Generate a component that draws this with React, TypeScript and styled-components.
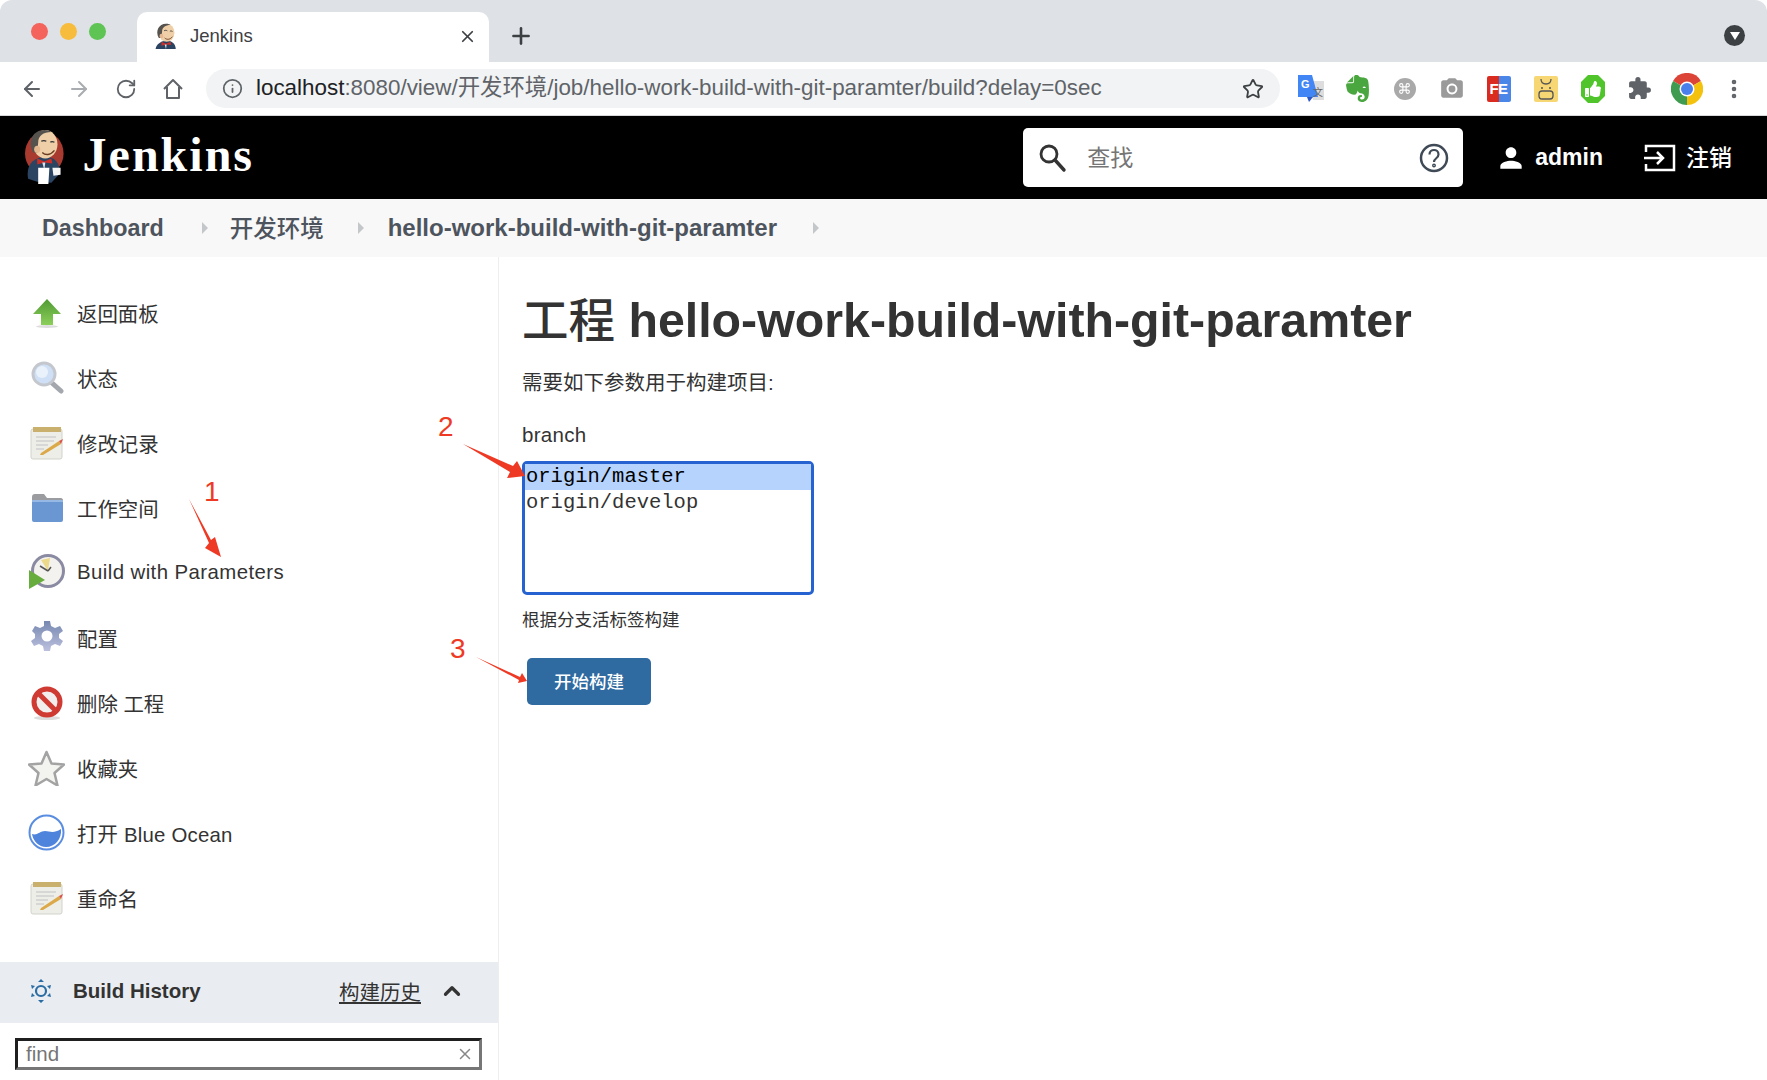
import React from "react";
import styled, { createGlobalStyle } from "styled-components";
import {
    ArrowLeft,
    ArrowRight,
    ChevronUp,
    Command,
    Info,
    MoreVertical,
    Plus,
    RotateCw,
    Star,
    X,
} from "lucide-react";
import { FaThumbsUp } from "react-icons/fa";
import { MdCameraAlt, MdExtension, MdPerson } from "react-icons/md";
import { SiEvernote } from "react-icons/si";

const SANS = `"Liberation Sans", "Noto Sans CJK SC", sans-serif`;

const GlobalStyle = createGlobalStyle`
    html, body {
        margin: 0;
        padding: 0;
        background: #ffffff;
    }
    * {
        box-sizing: border-box;
    }
`;

const Window = styled.div`
    position: relative;
    display: flex;
    flex-direction: column;
    width: 1767px;
    height: 1080px;
    overflow: hidden;
    border-radius: 12px;
    background: #ffffff;
    font-family: ${SANS};
    color: #333333;
`;

/* browser chrome */

const TabStrip = styled.div`
    display: flex;
    align-items: flex-end;
    flex: none;
    height: 62px;
    padding-left: 31px;
    background: #dee1e6;
`;

const Lights = styled.div`
    display: flex;
    gap: 12px;
    align-self: flex-start;
    margin-top: 23px;
    width: 106px;
`;

const Light = styled.span<{ $color: string }>`
    width: 17px;
    height: 17px;
    border-radius: 50%;
    background: ${(p) => p.$color};
`;

const Tab = styled.div`
    display: flex;
    align-items: center;
    width: 352px;
    height: 50px;
    padding: 0 12px 2px 16px;
    background: #ffffff;
    border-radius: 10px 10px 0 0;
    color: #3c4043;
    font-size: 18.5px;
`;

const TabTitle = styled.span`
    flex: 1;
    margin-left: 11px;
`;

const NewTab = styled.div`
    display: flex;
    align-self: center;
    margin: 9px 0 0 19px;
    color: #3c4043;
`;

const TabMenu = styled.div`
    display: flex;
    align-items: center;
    justify-content: center;
    align-self: center;
    width: 21px;
    height: 21px;
    margin: 8px 22px 0 auto;
    border-radius: 50%;
    background: #3c4043;
`;

const TabMenuArrow = styled.span`
    width: 0;
    height: 0;
    margin-top: 2px;
    border-left: 5px solid transparent;
    border-right: 5px solid transparent;
    border-top: 8px solid #ffffff;
`;

const Toolbar = styled.div`
    display: flex;
    align-items: center;
    flex: none;
    height: 54px;
    padding-left: 20px;
    background: #ffffff;
    border-bottom: 1px solid #d6d8db;
`;

const NavButtons = styled.div`
    display: flex;
    align-items: center;
    flex: none;
    gap: 23px;
    width: 186px;
`;

const NavButton = styled.span<{ $muted?: boolean }>`
    display: flex;
    align-items: center;
    justify-content: center;
    width: 24px;
    color: ${(p) => (p.$muted ? "#a9acb0" : "#5f6368")};
`;

const Omnibox = styled.div`
    display: flex;
    align-items: center;
    flex: none;
    width: 1074px;
    height: 39px;
    padding: 0 16px;
    border-radius: 20px;
    background: #f1f3f4;
    color: #5f6368;
`;

const Url = styled.div`
    flex: 1;
    margin-left: 13px;
    padding-bottom: 1px;
    font-size: 22.4px;
    line-height: 28px;
    color: #5f6368;
    white-space: nowrap;
`;

const UrlHost = styled.span`
    color: #202124;
`;

const Extensions = styled.div`
    display: flex;
    align-items: center;
    flex: none;
    margin-left: 7px;
`;

const Extension = styled.span`
    display: flex;
    align-items: center;
    justify-content: center;
    width: 47px;
    height: 40px;
    color: #5f6368;
`;

const GrayDisc = styled.span`
    display: flex;
    align-items: center;
    justify-content: center;
    width: 22px;
    height: 22px;
    border-radius: 50%;
    background: #a9a9a9;
    color: #ffffff;
`;

const FeBadge = styled.span`
    display: flex;
    align-items: center;
    justify-content: center;
    width: 24px;
    height: 26px;
    border-radius: 2px;
    background: linear-gradient(90deg, #d92b20 0 50%, #4a86e8 50%);
    color: #ffffff;
    font-size: 15px;
    font-weight: 700;
    letter-spacing: -0.5px;
`;

/* jenkins header */

const Header = styled.header`
    display: flex;
    align-items: center;
    flex: none;
    height: 83px;
    padding: 0 35px 0 24px;
    background: #000000;
    color: #ffffff;
`;

const Brand = styled.div`
    flex: 1;
    display: flex;
    align-items: center;
    gap: 18px;
`;

const BrandName = styled.span`
    padding-bottom: 5px;
    font-family: "Liberation Serif", serif;
    font-size: 48px;
    line-height: 56px;
    font-weight: 700;
    letter-spacing: 2px;
`;

const SearchBox = styled.div`
    display: flex;
    align-items: center;
    width: 440px;
    height: 59px;
    padding: 0 14px;
    border-radius: 5px;
    background: #ffffff;
    color: #333333;
`;

const SearchPlaceholder = styled.span`
    flex: 1;
    margin-left: 20px;
    padding-bottom: 4px;
    color: #757575;
    font-size: 23px;
`;

const HeaderLink = styled.div<{ $gap: number; $left: number }>`
    display: flex;
    align-items: center;
    gap: ${(p) => p.$gap}px;
    margin-left: ${(p) => p.$left}px;
    font-size: 23px;
    font-weight: 700;
`;

const LogoutLabel = styled.span`
    padding-bottom: 3px;
    font-weight: 500;
`;

/* breadcrumbs */

const Breadcrumbs = styled.nav`
    display: flex;
    align-items: center;
    flex: none;
    height: 58px;
    padding-left: 42px;
    background: #f8f8f8;
    color: #4d545d;
    font-size: 24px;
    font-weight: 700;
`;

const DashboardCrumb = styled.span`
    font-size: 23.3px;
`;

const CrumbCjk = styled.span`
    padding-bottom: 2px;
    font-size: 23.5px;
    font-weight: 500;
`;

const Caret = styled.span<{ $left: number; $right: number }>`
    width: 0;
    height: 0;
    margin: 0 ${(p) => p.$right}px 0 ${(p) => p.$left}px;
    border-top: 6px solid transparent;
    border-bottom: 6px solid transparent;
    border-left: 6px solid #c4c7ca;
`;

/* page */

const Body = styled.div`
    display: flex;
    flex: 1;
    min-height: 0;
`;

const Sidebar = styled.aside`
    display: flex;
    flex-direction: column;
    flex: none;
    width: 499px;
    border-right: 1px solid #eeeeee;
`;

const Tasks = styled.ul`
    flex: 1;
    margin: 0;
    padding: 23px 0 0;
    list-style: none;
`;

const Task = styled.li<{ $spacing: number }>`
    display: flex;
    align-items: center;
    height: 65px;
    padding-left: 28px;
    font-size: 20.4px;
    letter-spacing: ${(p) => p.$spacing}px;
    color: #333333;
`;

const TaskIcon = styled.span`
    display: flex;
    align-items: center;
    justify-content: center;
    width: 37px;
    height: 37px;
    margin-right: 12px;
    filter: blur(0.4px);
`;

const HistoryBar = styled.div`
    display: flex;
    align-items: center;
    flex: none;
    height: 61px;
    padding: 0 33px 3px 30px;
    background: #e9edf1;
    color: #333333;
`;

const HistoryTitle = styled.span`
    flex: 1;
    margin-left: 21px;
    font-size: 20.5px;
    font-weight: 700;
`;

const HistoryLink = styled.span`
    margin-right: 18px;
    padding-bottom: 1px;
    font-size: 20.5px;
    text-decoration: underline;
`;

const FindBox = styled.div`
    display: flex;
    align-items: center;
    justify-content: space-between;
    flex: none;
    height: 32px;
    margin: 15px 16px 10px 15px;
    padding: 0 5px 0 8px;
    border-style: solid;
    border-width: 3px;
    border-color: #1f1f1f #767676 #767676 #1f1f1f;
    color: #757575;
    font-size: 20.5px;
`;

const Content = styled.main`
    flex: 1;
    padding: 33px 0 0 23px;
`;

const Title = styled.h1`
    margin: 0 0 18px;
    font-size: 48.3px;
    line-height: 60px;
    font-weight: 700;
    color: #333333;
    white-space: nowrap;
`;

const TitleCjk = styled.span`
    font-size: 46.5px;
    font-weight: 500;
`;

const Intro = styled.p`
    margin: 0 0 24px;
    font-size: 20.5px;
    line-height: 28px;
`;

const ParamName = styled.div`
    margin-bottom: 12px;
    font-size: 20.5px;
    line-height: 28px;
    letter-spacing: 0.3px;
`;

const BranchList = styled.div`
    width: 292px;
    height: 134px;
    border: 3px solid #2763d0;
    border-radius: 5px;
    font-family: "Liberation Mono", monospace;
    font-size: 20.5px;
`;

const BranchOption = styled.div<{ $selected?: boolean }>`
    height: 26px;
    padding-left: 1px;
    line-height: 25px;
    background: ${(p) => (p.$selected ? "#b5d3fc" : "transparent")};
    color: ${(p) => (p.$selected ? "#000000" : "#333333")};
`;

const ParamHelp = styled.div`
    margin: 13px 0 25px;
    font-size: 17.5px;
    line-height: 25px;
`;

const BuildButton = styled.button`
    display: block;
    width: 124px;
    height: 47px;
    margin-left: 5px;
    padding: 0 0 2px;
    border: none;
    border-radius: 5px;
    background: #2f6aa0;
    color: #ffffff;
    font-family: ${SANS};
    font-size: 17.5px;
    font-weight: 500;
`;

/* red annotations lie over the page */

const NoteNumber = styled.span<{ $x: number; $y: number }>`
    position: absolute;
    left: ${(p) => p.$x}px;
    top: ${(p) => p.$y}px;
    color: #ee3a24;
    font-size: 28px;
    line-height: 32px;
`;

const NoteArrow = styled.svg<{ $x: number; $y: number }>`
    position: absolute;
    left: ${(p) => p.$x}px;
    top: ${(p) => p.$y}px;
`;

/* drawings */

const Butler: React.FC<{ height: number; bust?: boolean }> = ({ height, bust }) => (
    <svg
        width={bust ? height : height * 0.7}
        height={height}
        viewBox={bust ? "0 0 40 40" : "0 0 40 57"}
    >
        {!bust && <ellipse cx="20" cy="24" rx="19" ry="21" fill="#a83a30" />}
        <path d="M4 49C2 37 7 29 20 27c10 0 16 6 15 17l-8 9-14-1z" fill="#2a4462" />
        <ellipse cx="21" cy="15" rx="12" ry="14" fill="#eecfa8" />
        <path d="M9 23C3 12 9 1 20 1c4 0 6 1 7 2-8 0-13 4-13 10l-1 10z" fill="#56534f" />
        <ellipse cx="13" cy="20" rx="3" ry="3.500" fill="#e6b890" />
        <path d="M17 12c2-1 3-1 5 0M26 13c1-1 2-1 4 0" stroke="#333" strokeWidth="1.300" fill="none" />
        <path d="M18 23c3 3 8 3 12-2" stroke="#6a3c20" strokeWidth="1.400" fill="none" />
        <path d="M13 29l7 3 7-3 1 5-8-1-7 2z" fill="#cc2f28" />
        <path d="M18 33h3l-1 7z" fill="#dfe4e8" />
        {!bust && <path d="M14 38h11l-1 16H14z" fill="#ffffff" />}
        {!bust && <path d="M28 38h8v7l-7 1z" fill="#f4f4f4" />}
    </svg>
);

const HouseIcon = () => (
    <svg width="24" height="24" viewBox="0 0 24 24" fill="none" stroke="#5f6368" strokeWidth="2">
        <path d="M3 12L12 3l9 9M6 10v11h12V10" strokeLinejoin="round" />
    </svg>
);

const SearchLens = () => (
    <svg width="30" height="30" viewBox="0 0 30 30" fill="none" stroke="#333333" strokeWidth="2.800">
        <circle cx="12" cy="11" r="8" />
        <path d="M18 17l9 10" strokeWidth="3.400" strokeLinecap="round" />
    </svg>
);

const UpArrow = () => (
    <svg width="32" height="32" viewBox="0 0 32 32">
        <defs>
            <linearGradient id="up" x1="0" y1="0" x2="0" y2="1">
                <stop offset="0" stopColor="#4f9a34" />
                <stop offset="1" stopColor="#8ccf5a" />
            </linearGradient>
        </defs>
        <path d="M16 2L30 17H22V28H10V17H2z" fill="url(#up)" />
        <ellipse cx="16" cy="29.500" rx="11" ry="1.500" fill="#dddddd" />
    </svg>
);

const Magnifier = () => (
    <svg width="36" height="36" viewBox="0 0 36 36">
        <path d="M23 23l9 8" stroke="#a4a8ae" strokeWidth="5" strokeLinecap="round" />
        <circle cx="15" cy="14" r="11" fill="#cfe0f6" stroke="#c4c8ce" strokeWidth="3" />
        <circle cx="13" cy="12" r="6" fill="#e9f1fb" />
    </svg>
);

const Notepad = () => (
    <svg width="36" height="36" viewBox="0 0 36 36">
        <rect x="2" y="4" width="31" height="30" rx="2" fill="#eeeee8" stroke="#d2d2cc" />
        <rect x="4" y="2" width="28" height="5" fill="#c9b06c" />
        <path d="M7 12h20M7 16h18M7 20h12M7 24h8" stroke="#d0d0d0" strokeWidth="1.300" />
        <path d="M12 28l18-12 2 3-18 11-3 0z" fill="#dba94a" />
        <path d="M30 16l2 3 2-5z" fill="#d9534a" />
    </svg>
);

const Folder = () => (
    <svg width="34" height="30" viewBox="0 0 34 30">
        <path d="M2 4c0-2 1-3 3-3h9l3 4h14c1 0 2 1 2 2v3H2z" fill="#9a9c9f" />
        <rect x="2" y="7" width="31" height="22" rx="2" fill="#6a97d2" />
        <rect x="2" y="7" width="31" height="2" fill="#95b8e4" />
    </svg>
);

const Clock = () => (
    <svg width="37" height="37" viewBox="0 0 37 37">
        <circle cx="20" cy="17" r="15.500" fill="#f4f2ee" stroke="#8b8aa3" strokeWidth="3" />
        <path d="M20 17L13 6l9-2z" fill="#ecd98a" />
        <path d="M20 17l-8-5M20 17l3-4" stroke="#555" strokeWidth="1.500" />
        <path d="M1 16l16 10L1 35z" fill="#67ad3e" />
    </svg>
);

const Gear = () => (
    <svg width="36" height="36" viewBox="0 0 36 36">
        <defs>
            <linearGradient id="gear" x1="0" y1="0" x2="0" y2="1">
                <stop offset="0" stopColor="#7688b0" />
                <stop offset="1" stopColor="#bcc0de" />
            </linearGradient>
        </defs>
        <path
            d="M15 1h6l1 5 4 2 5-2 3 5-4 3v4l4 3-3 5-5-2-4 2-1 5h-6l-1-5-4-2-5 2-3-5 4-3v-4L3 11l3-5 5 2 4-2z"
            fill="url(#gear)"
        />
        <circle cx="18" cy="16" r="5.500" fill="#ffffff" />
    </svg>
);

const NoEntry = () => (
    <svg width="34" height="36" viewBox="0 0 34 36">
        <ellipse cx="17" cy="33" rx="13" ry="2" fill="#dddddd" />
        <circle cx="17" cy="17" r="13" fill="#f2eeee" stroke="#cf3a32" strokeWidth="5" />
        <path d="M8 8l18 18" stroke="#cf3a32" strokeWidth="5" />
    </svg>
);

const Favourite = () => (
    <svg width="37" height="36" viewBox="0 0 37 36">
        <path
            d="M18.500 2l5 11.500 12.500 1-9.500 8.500 3 12.500-11-6.500-11 6.500 3-12.500L1 14.500l12.500-1z"
            fill="#f3f3f0"
            stroke="#a3a3a3"
            strokeWidth="2.500"
            strokeLinejoin="round"
        />
    </svg>
);

const OceanBall = () => (
    <svg width="37" height="37" viewBox="0 0 37 37">
        <circle cx="18.500" cy="18.500" r="17" fill="#ffffff" stroke="#5a8de0" strokeWidth="2" />
        <path d="M4 20c5 2 8-3 13-3 5 0 8 3 16-2 1 10-6 18-15 18-7 0-13-6-14-13z" fill="#4f84dc" />
    </svg>
);

const HistorySun = () => (
    <svg width="22" height="24" viewBox="0 0 22 24" fill="#2b6ca3">
        <circle cx="11" cy="12" r="5" fill="none" stroke="#2b6ca3" strokeWidth="2.200" />
        <path d="M11 0l3 3H8zM11 24l-3-3h6zM1 6l4 1-3 3zM21 6l-1 4-3-3zM1 18l1-4 3 3zM21 18l-4-1 3-3z" />
    </svg>
);

const TranslateIcon = () => (
    <svg width="26" height="27" viewBox="0 0 26 27">
        <path d="M11 6h15v19H15z" fill="#dddddd" />
        <path d="M0 0h14l6 22H0z" fill="#4285f4" />
        <path d="M9 22h6l-4 5z" fill="#2a56c6" />
        <text x="3" y="13" fill="#ffffff" fontSize="11" fontWeight="700" fontFamily="Liberation Sans">
            G
        </text>
        <text x="15" y="21" fill="#666666" fontSize="10" fontFamily="Noto Sans CJK SC">
            文
        </text>
    </svg>
);

const CowIcon = () => (
    <svg width="24" height="26" viewBox="0 0 24 26">
        <rect width="24" height="26" rx="2" fill="#f7d774" />
        <path d="M7 3c0 4 3 5 5 5s5-1 5-5" stroke="#555" strokeWidth="1.300" fill="none" />
        <circle cx="8" cy="12" r="1" fill="#555" />
        <circle cx="16" cy="12" r="1" fill="#555" />
        <rect x="5" y="15" width="14" height="8" rx="3" fill="none" stroke="#555" strokeWidth="1.300" />
    </svg>
);

const ThumbBadge = () => (
    <svg width="24" height="28" viewBox="0 0 24 28">
        <path d="M7 0h10l7 7v14l-7 7H7l-7-7V7z" fill="#4fc42b" />
        <foreignObject x="4" y="6" width="16" height="16">
            <FaThumbsUp size={16} color="#ffffff" />
        </foreignObject>
    </svg>
);

const ChromeLogo = () => (
    <svg width="32" height="32" viewBox="0 0 32 32">
        <path d="M16 16L2.100 8A16 16 0 0 1 29.900 8z" fill="#db4437" />
        <path d="M16 16L29.900 8A16 16 0 0 1 16 32z" fill="#f4c20d" />
        <path d="M16 16L16 32A16 16 0 0 1 2.100 8z" fill="#3e9b4f" />
        <circle cx="16" cy="16" r="7.500" fill="#ffffff" />
        <circle cx="16" cy="16" r="6" fill="#4a80ec" />
    </svg>
);

const LogoutIcon = () => (
    <svg width="32" height="28" viewBox="0 0 32 28" fill="none" stroke="#ffffff" strokeWidth="2.500">
        <path d="M2 8V2h28v24H2v-6" />
        <path d="M0 14h18M13 8l6 6-6 6" />
    </svg>
);

const HelpIcon = () => (
    <svg width="30" height="30" viewBox="0 0 30 30" fill="none" stroke="#3f4a56" strokeWidth="2.500">
        <circle cx="15" cy="15" r="13" />
        <path d="M10.500 11.500c0-6 9-6 9 0 0 4-4.500 3.500-4.500 7.500" strokeWidth="2.200" />
        <circle cx="15" cy="22.500" r="0.700" />
    </svg>
);

const tasks: { label: string; icon: React.ReactNode; spacing?: number }[] = [
    { label: "返回面板", icon: <UpArrow /> },
    { label: "状态", icon: <Magnifier /> },
    { label: "修改记录", icon: <Notepad /> },
    { label: "工作空间", icon: <Folder /> },
    { label: "Build with Parameters", icon: <Clock />, spacing: 0.42 },
    { label: "配置", icon: <Gear /> },
    { label: "删除 工程", icon: <NoEntry /> },
    { label: "收藏夹", icon: <Favourite /> },
    { label: "打开 Blue Ocean", icon: <OceanBall />, spacing: 0.2 },
    { label: "重命名", icon: <Notepad /> },
];

const App: React.FC = () => {
    return (
        <Window>
            <GlobalStyle />
            <TabStrip>
                <Lights>
                    <Light $color="#f4645c" />
                    <Light $color="#f8bc3c" />
                    <Light $color="#5ec454" />
                </Lights>
                <Tab>
                    <Butler height={26} bust />
                    <TabTitle>Jenkins</TabTitle>
                    <X size={19} strokeWidth={2.2} />
                </Tab>
                <NewTab>
                    <Plus size={26} strokeWidth={2.4} />
                </NewTab>
                <TabMenu>
                    <TabMenuArrow />
                </TabMenu>
            </TabStrip>
            <Toolbar>
                <NavButtons>
                    <NavButton>
                        <ArrowLeft size={24} />
                    </NavButton>
                    <NavButton $muted>
                        <ArrowRight size={24} />
                    </NavButton>
                    <NavButton>
                        <RotateCw size={22} />
                    </NavButton>
                    <NavButton>
                        <HouseIcon />
                    </NavButton>
                </NavButtons>
                <Omnibox>
                    <Info size={21} />
                    <Url>
                        <UrlHost>localhost</UrlHost>
                        :8080/view/开发环境/job/hello-work-build-with-git-paramter/build?delay=0sec
                    </Url>
                    <Star size={22} color="#3c4043" />
                </Omnibox>
                <Extensions>
                    <Extension>
                        <TranslateIcon />
                    </Extension>
                    <Extension>
                        <SiEvernote size={27} color="#4aa63e" />
                    </Extension>
                    <Extension>
                        <GrayDisc>
                            <Command size={13} />
                        </GrayDisc>
                    </Extension>
                    <Extension>
                        <MdCameraAlt size={26} color="#9a9a9a" />
                    </Extension>
                    <Extension>
                        <FeBadge>FE</FeBadge>
                    </Extension>
                    <Extension>
                        <CowIcon />
                    </Extension>
                    <Extension>
                        <ThumbBadge />
                    </Extension>
                    <Extension>
                        <MdExtension size={25} />
                    </Extension>
                    <Extension>
                        <ChromeLogo />
                    </Extension>
                    <Extension>
                        <MoreVertical size={24} strokeWidth={2.6} />
                    </Extension>
                </Extensions>
            </Toolbar>
            <Header>
                <Brand>
                    <Butler height={58} />
                    <BrandName>Jenkins</BrandName>
                </Brand>
                <SearchBox>
                    <SearchLens />
                    <SearchPlaceholder>查找</SearchPlaceholder>
                    <HelpIcon />
                </SearchBox>
                <HeaderLink $gap={8} $left={32}>
                    <MdPerson size={32} />
                    admin
                </HeaderLink>
                <HeaderLink $gap={10} $left={41}>
                    <LogoutIcon />
                    <LogoutLabel>注销</LogoutLabel>
                </HeaderLink>
            </Header>
            <Breadcrumbs>
                <DashboardCrumb>Dashboard</DashboardCrumb>
                <Caret $left={38} $right={22} />
                <CrumbCjk>开发环境</CrumbCjk>
                <Caret $left={34} $right={24} />
                hello-work-build-with-git-paramter
                <Caret $left={36} $right={0} />
            </Breadcrumbs>
            <Body>
                <Sidebar>
                    <Tasks>
                        {tasks.map((task) => (
                            <Task key={task.label} $spacing={task.spacing ?? 0}>
                                <TaskIcon>{task.icon}</TaskIcon>
                                {task.label}
                            </Task>
                        ))}
                    </Tasks>
                    <HistoryBar>
                        <HistorySun />
                        <HistoryTitle>Build History</HistoryTitle>
                        <HistoryLink>构建历史</HistoryLink>
                        <ChevronUp size={26} strokeWidth={3} />
                    </HistoryBar>
                    <FindBox>
                        find
                        <X size={18} color="#888888" />
                    </FindBox>
                </Sidebar>
                <Content>
                    <Title>
                        <TitleCjk>工程</TitleCjk> hello-work-build-with-git-paramter
                    </Title>
                    <Intro>需要如下参数用于构建项目:</Intro>
                    <ParamName>branch</ParamName>
                    <BranchList>
                        <BranchOption $selected>origin/master</BranchOption>
                        <BranchOption>origin/develop</BranchOption>
                    </BranchList>
                    <ParamHelp>根据分支活标签构建</ParamHelp>
                    <BuildButton>开始构建</BuildButton>
                </Content>
            </Body>

            <NoteNumber $x={204} $y={476}>1</NoteNumber>
            <NoteArrow $x={185} $y={496} width="40" height="64" viewBox="0 0 40 64">
                <path d="M4 3L26 44l4-3 6 20-16-9 4-5z" fill="#ee3a24" />
            </NoteArrow>
            <NoteNumber $x={438} $y={411}>2</NoteNumber>
            <NoteArrow $x={461} $y={441} width="66" height="40" viewBox="0 0 66 40">
                <path d="M2 3l50 22 4-5 8 15-18 2 3-6z" fill="#ee3a24" />
            </NoteArrow>
            <NoteNumber $x={450} $y={633}>3</NoteNumber>
            <NoteArrow $x={474} $y={654} width="54" height="32" viewBox="0 0 54 32">
                <path d="M2 3l44 20 2-4 5 8-9 2 1-3z" fill="#ee3a24" />
            </NoteArrow>
        </Window>
    );
};

export default App;
